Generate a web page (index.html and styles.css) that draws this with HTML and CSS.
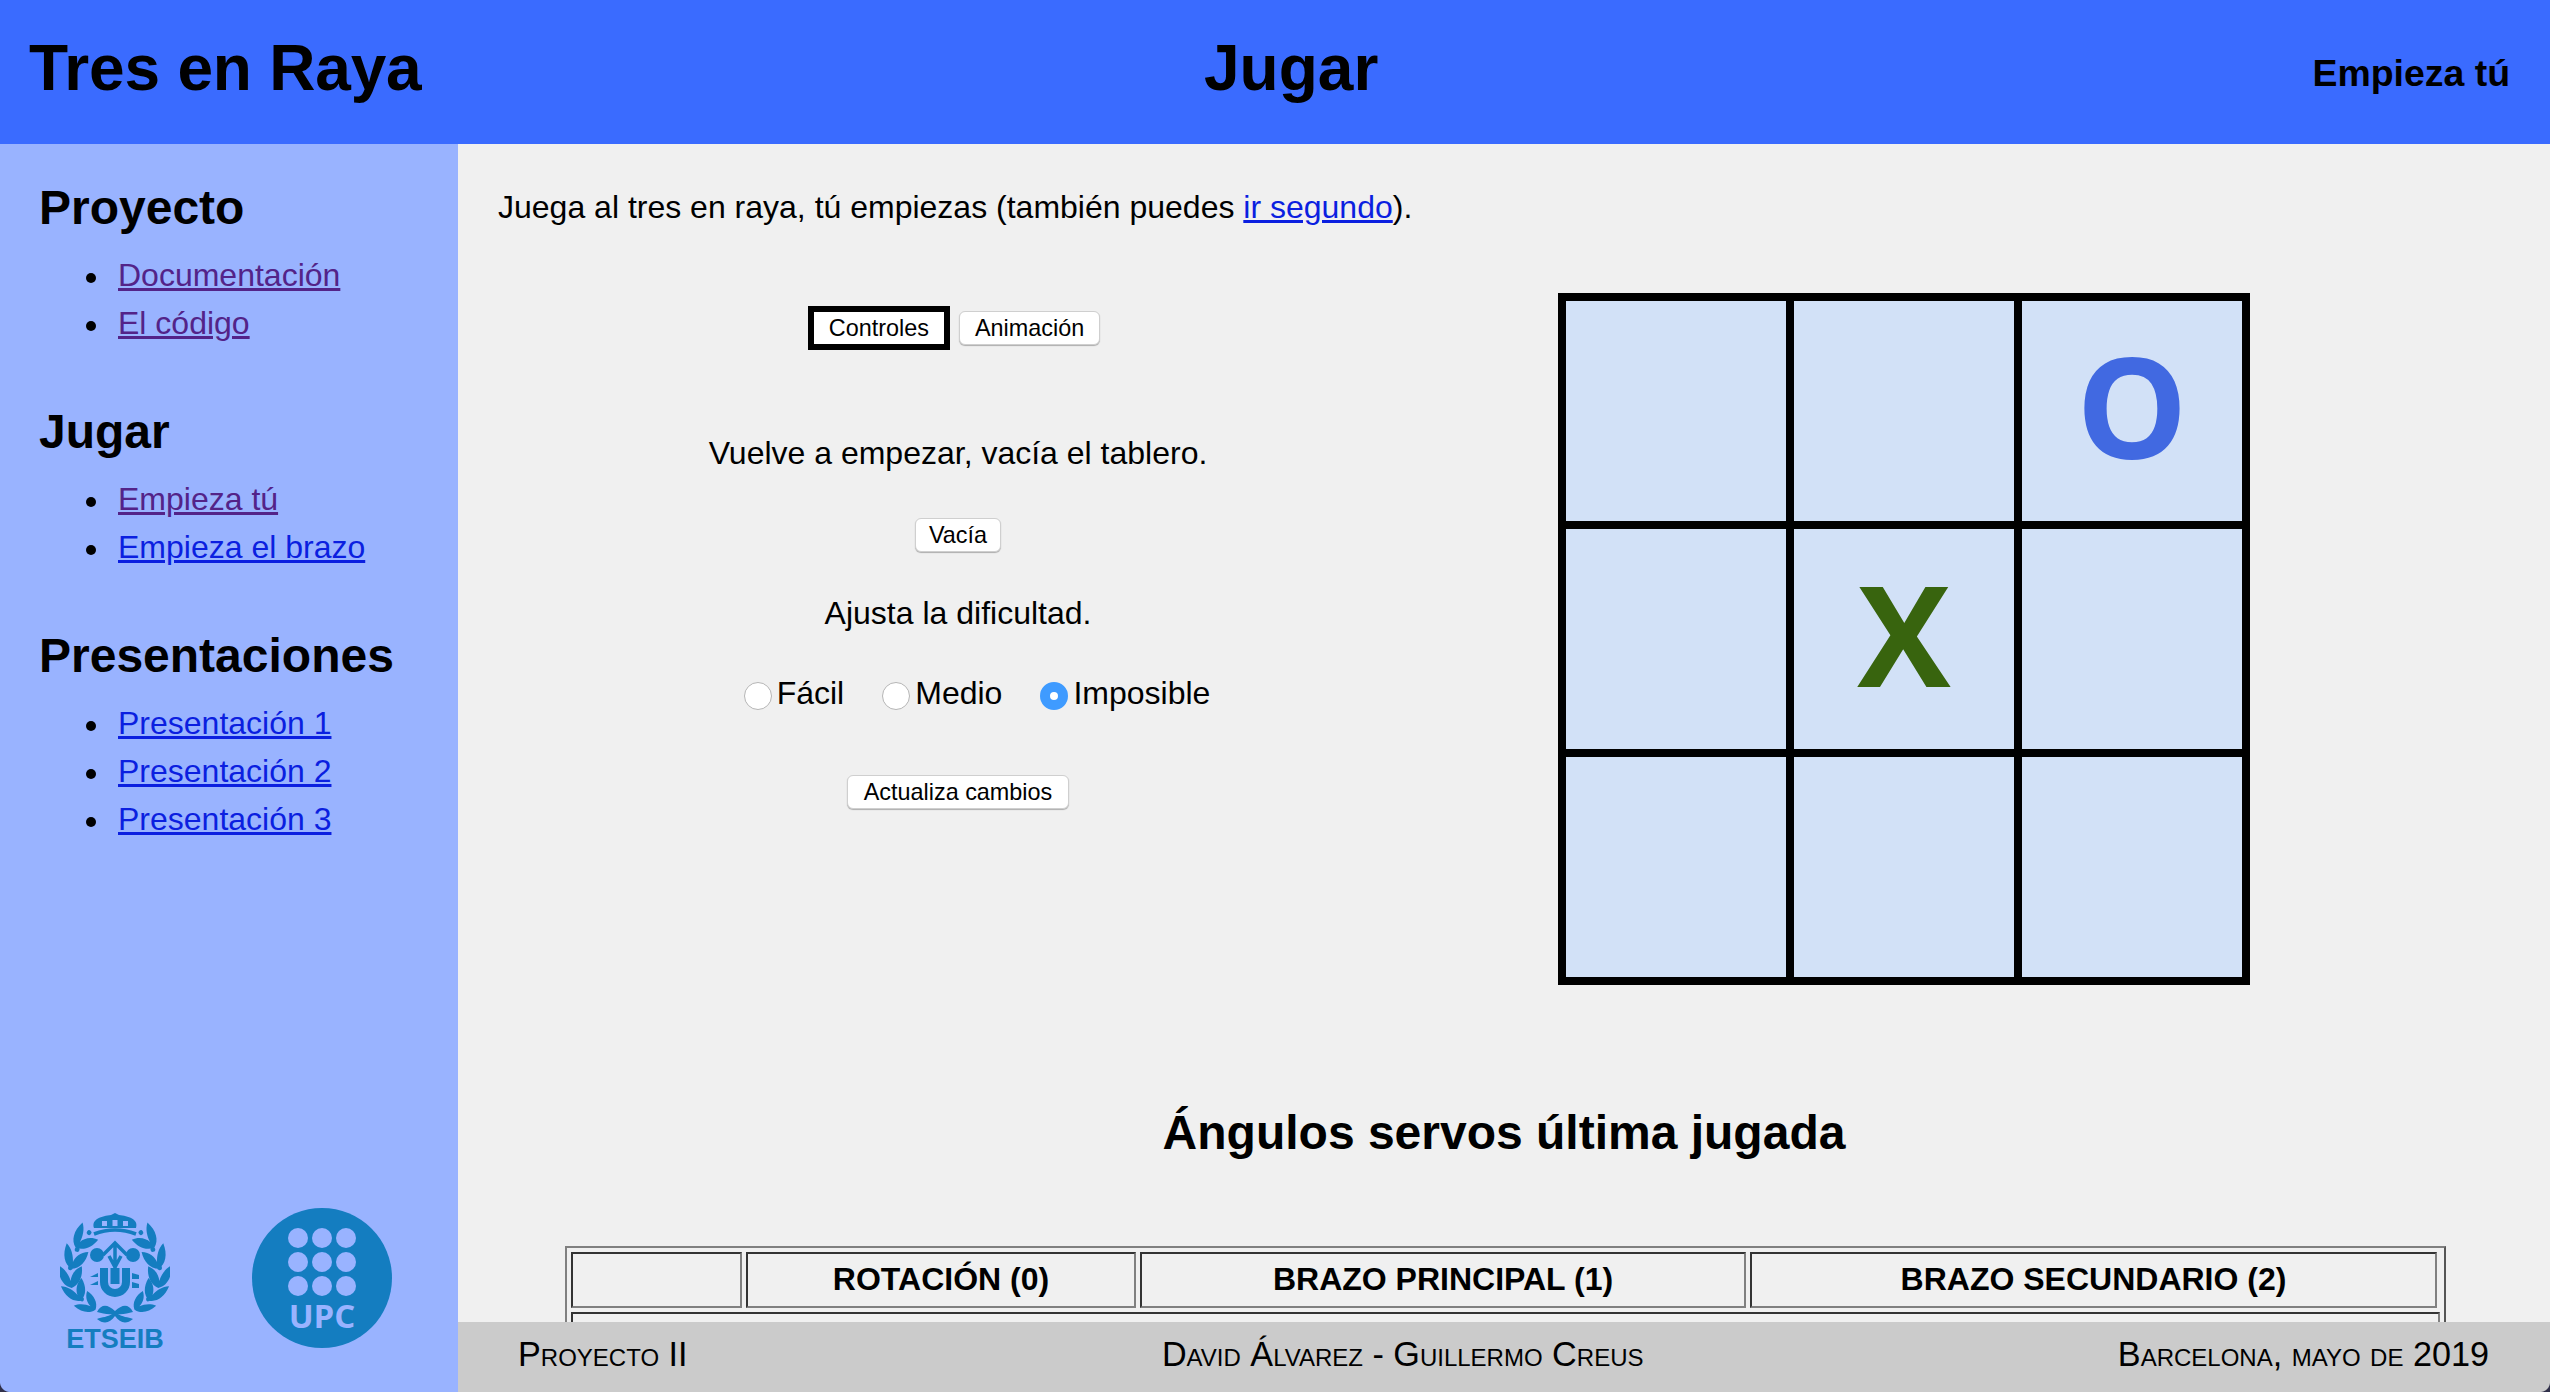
FILE: index.html
```html
<!DOCTYPE html>
<html lang="es">
<head>
<meta charset="utf-8">
<title>Tres en Raya</title>
<link rel="stylesheet" href="styles.css">
</head>
<body>
<div class="page">
  <header class="topbar">
    <h1 class="topbar-title">Tres en Raya</h1>
    <h1 class="topbar-page">Jugar</h1>
    <h3 class="topbar-mode">Empieza tú</h3>
  </header>

  <aside class="sidebar">
    <nav class="nav">
      <section class="nav-group">
        <h2 class="nav-title">Proyecto</h2>
        <ul class="nav-list">
          <li><a class="visited" href="#">Documentación</a></li>
          <li><a class="visited" href="#">El código</a></li>
        </ul>
      </section>
      <section class="nav-group">
        <h2 class="nav-title">Jugar</h2>
        <ul class="nav-list">
          <li><a class="visited" href="#">Empieza tú</a></li>
          <li><a class="link" href="#">Empieza el brazo</a></li>
        </ul>
      </section>
      <section class="nav-group">
        <h2 class="nav-title">Presentaciones</h2>
        <ul class="nav-list">
          <li><a class="link" href="#">Presentación 1</a></li>
          <li><a class="link" href="#">Presentación 2</a></li>
          <li><a class="link" href="#">Presentación 3</a></li>
        </ul>
      </section>
    </nav>
    <div class="logos">
      <svg class="logo-etseib" viewBox="0 0 110 140" width="110" height="140" aria-label="ETSEIB">
        <defs>
          <g id="leaf">
            <path d="M0 12C-8 9-12 0-10-12C-4-8-1-1 0 5C1 0 5-6 13-8C13 2 8 10 0 12Z"/>
            <circle cx="1.500" cy="-8" r="2.400"/>
          </g>
          <g id="wreath">
            <use href="#leaf" transform="translate(23 25) rotate(38)"/>
            <use href="#leaf" transform="translate(14 44) rotate(12)"/>
            <use href="#leaf" transform="translate(10 63) rotate(-8)"/>
            <use href="#leaf" transform="translate(15 78) rotate(-32) scale(.95)"/>
            <use href="#leaf" transform="translate(27 91) rotate(-58) scale(.85)"/>
          </g>
        </defs>
        <g class="crest">
          <path d="M34 15C31 6 42 3 51 2L55 0L59 2C68 3 79 6 76 15Z"/>
          <path class="crest-cut" d="M42 8h5v5h-5zM52.500 7h5v6h-5zM63 8h5v5h-5z"/>
          <path class="crest-line" d="M34 21Q55 13 76 21"/>
          <use href="#wreath"/>
          <use href="#wreath" transform="matrix(-1 0 0 1 110 0)"/>
          <circle cx="37" cy="42" r="7"/>
          <circle cx="73" cy="42" r="7"/>
          <path class="crest-line" d="M43 42L55 30L67 42M55 30V62M49 43L55 54L61 43"/>
          <path d="M40 55h8v14a7 7 0 0 0 14 0V55h8v14a15 15 0 0 1-30 0Z"/>
          <path d="M50.500 55h9v16h-9z"/>
          <path d="M30 64L38 60V64ZM30 72L38 68V72ZM72 60L79 62V66H72ZM72 69L79 71V75H72Z"/>
          <path d="M37 99C42 90 48 92 55 98C62 92 68 90 73 99C68 100 62 102 58 101C62 104 68 104 73 106C66 112 60 110 55 103C50 110 44 112 37 106C42 104 48 104 52 101C48 102 42 100 37 99Z"/>
        </g>
        <text class="logo-etseib-text" x="55" y="135" text-anchor="middle">ETSEIB</text>
      </svg>
      <svg class="logo-upc" viewBox="0 0 140 140" width="140" height="140" aria-label="UPC">
        <circle class="upc-disc" cx="70" cy="70" r="70"/>
        <g class="upc-dots">
          <circle cx="46" cy="30" r="10"/><circle cx="70" cy="30" r="10"/><circle cx="94" cy="30" r="10"/>
          <circle cx="46" cy="54" r="10"/><circle cx="70" cy="54" r="10"/><circle cx="94" cy="54" r="10"/>
          <circle cx="46" cy="78" r="10"/><circle cx="70" cy="78" r="10"/><circle cx="94" cy="78" r="10"/>
        </g>
        <text class="upc-text" x="70" y="120" text-anchor="middle">UPC</text>
      </svg>
    </div>
  </aside>

  <main class="content">
    <p class="intro">Juega al tres en raya, tú empiezas (también puedes <a class="link" href="#">ir segundo</a>).</p>

    <div class="play">
      <div class="controls">
        <div class="tabs">
          <button class="btn btn-active" type="button">Controles</button>
          <button class="btn" type="button">Animación</button>
        </div>
        <p class="controls-text text-reset">Vuelve a empezar, vacía el tablero.</p>
        <button class="btn btn-clear" type="button">Vacía</button>
        <p class="controls-text text-level">Ajusta la dificultad.</p>
        <div class="levels">
          <label class="level"><input class="radio" type="radio" name="nivel">Fácil</label>
          <label class="level"><input class="radio" type="radio" name="nivel">Medio</label>
          <label class="level"><input class="radio" type="radio" name="nivel" checked>Imposible</label>
        </div>
        <button class="btn btn-update" type="button">Actualiza cambios</button>
      </div>

      <div class="board">
        <div class="cell"></div>
        <div class="cell"></div>
        <div class="cell cell-o">O</div>
        <div class="cell"></div>
        <div class="cell cell-x">X</div>
        <div class="cell"></div>
        <div class="cell"></div>
        <div class="cell"></div>
        <div class="cell"></div>
      </div>
    </div>

    <h2 class="servo-title">Ángulos servos última jugada</h2>

    <div class="servo-table">
      <div class="servo-cell"></div>
      <div class="servo-cell">ROTACIÓN (0)</div>
      <div class="servo-cell">BRAZO PRINCIPAL (1)</div>
      <div class="servo-cell servo-cell-last">BRAZO SECUNDARIO (2)</div>
      <div class="servo-cell servo-cell-wide"></div>
    </div>
  </main>

  <footer class="footer">
    <span>Proyecto II</span>
    <span>David Álvarez - Guillermo Creus</span>
    <span>Barcelona, mayo de 2019</span>
  </footer>
</div>
</body>
</html>
```

FILE: styles.css
```css
* { box-sizing: border-box; }

html, body {
  margin: 0;
  height: 100%;
  overflow: hidden;
}

body {
  font-family: "Liberation Sans", Arial, sans-serif;
  font-size: 32px;
  color: #000;
}

.page {
  position: relative;
  display: grid;
  grid-template-columns: 458px 1fr;
  grid-template-rows: 144px 1fr 70px;
  height: 100vh;
  background: #f0f0f0;
}

.page::before,
.page::after {
  content: "";
  position: absolute;
  bottom: 0;
  width: 10px;
  height: 10px;
  z-index: 5;
}

.page::before {
  left: 0;
  background: radial-gradient(circle at top right, transparent 9.5px, #30304a 10.5px);
}

.page::after {
  right: 0;
  background: radial-gradient(circle at top left, transparent 9.5px, #30304a 10.5px);
}

/* Top bar */
.topbar {
  grid-column: 1 / -1;
  display: grid;
  grid-template-columns: 1175px auto 1fr;
  padding: 0 40px 0 29px;
  background: #3a6bff;
}

.topbar-title,
.topbar-page {
  margin: 0;
  font-size: 64px;
  line-height: 136px;
  font-weight: 700;
}

.topbar-title { letter-spacing: -.2px; }

.topbar-mode {
  margin: 0;
  font-size: 37.44px;
  line-height: 146px;
  font-weight: 700;
  text-align: right;
}

/* Sidebar */
.sidebar {
  grid-row: 2 / 4;
  display: flex;
  flex-direction: column;
  background: #99b3ff;
  padding: 36px 0 39px 39px;
}

.nav-group + .nav-group { margin-top: 57px; }

.nav-title {
  margin: 0 0 15px;
  font-size: 48px;
  line-height: 56px;
  font-weight: 700;
}

.nav-list {
  margin: 0;
  padding-left: 79px;
  line-height: 48px;
  list-style: none;
}

.nav-list li::before {
  content: "";
  display: inline-block;
  width: 10px;
  height: 10px;
  margin: 0 22px 3px -32px;
  border-radius: 50%;
  background: #000;
}

.link { color: #0b1fe0; }
.visited { color: #532388; }

.logos {
  display: flex;
  align-items: flex-start;
  gap: 82px;
  margin-top: auto;
  padding-left: 21px;
}

.logo-etseib,
.logo-upc {
  display: block;
  flex: none;
}

.logo-etseib { margin-top: 5px; }

.crest { fill: #147dc0; }
.crest-cut { fill: #99b3ff; }
.crest-line {
  fill: none;
  stroke: #147dc0;
  stroke-width: 3.500;
}

.logo-etseib-text {
  font-size: 27px;
  font-weight: 700;
  fill: #147dc0;
}

.upc-disc { fill: #147dc0; }
.upc-dots { fill: #99b3ff; }

.upc-text {
  font-family: "Open Sans", "Liberation Sans", sans-serif;
  font-size: 33px;
  font-weight: 700;
  fill: #99b3ff;
}

/* Main content */
.content {
  min-height: 0;
  overflow: hidden;
  padding: 39px 0 0 40px;
}

.intro {
  margin: 0;
  line-height: 48px;
}

.play {
  display: grid;
  grid-template-columns: 920px auto;
  justify-content: start;
  align-items: start;
  column-gap: 140px;
  margin-top: 62px;
}

.controls {
  display: flex;
  flex-direction: column;
  align-items: center;
  padding-top: 13px;
}

.tabs {
  display: flex;
  align-items: center;
  gap: 9px;
  padding-right: 8px;
}

.btn {
  height: 34px;
  padding: 1px 15px 0;
  border: 1px solid #cfcfcf;
  border-radius: 6px;
  background: #fff;
  box-shadow: 0 1px 1px rgba(0, 0, 0, .28);
  font: 23.4px/1 "Liberation Sans", Arial, sans-serif;
  color: #000;
}

.btn-active {
  height: 44px;
  padding: 1px 15px 0;
  border: 6px solid #000;
  border-radius: 0;
  box-shadow: none;
}

.btn-clear {
  margin-top: 41px;
  padding: 1px 13px 0;
}

.btn-update {
  margin-top: 58px;
  padding: 1px 16px 0;
}

.controls-text {
  margin: 0;
  line-height: 48px;
}

.text-reset { margin-top: 79px; }
.text-level { margin-top: 37px; }

.levels {
  display: flex;
  gap: 38px;
  margin-top: 32px;
  padding-left: 38px;
  line-height: 48px;
}

.level {
  display: flex;
  align-items: center;
  gap: 5px;
}

.radio {
  appearance: none;
  flex: none;
  width: 28px;
  height: 28px;
  margin: 6px 0 0;
  border: 1px solid #b5b5b5;
  border-radius: 50%;
  background: #fff;
}

.radio:checked {
  border: 10px solid #3f9bff;
  background: #fff;
}

.board {
  display: grid;
  grid-template-columns: repeat(3, 220px);
  grid-auto-rows: 220px;
  gap: 8px;
  padding: 8px;
  background: #000;
}

.cell {
  display: flex;
  align-items: center;
  justify-content: center;
  padding-bottom: 12px;
  background: #d2e1f7;
  font-family: "Open Sans", "Liberation Sans", sans-serif;
  font-size: 140px;
  line-height: 1;
  font-weight: 700;
}

.cell-o { color: #4169e1; }
.cell-x { color: #38640e; }

.servo-title {
  margin: 120px 0 85px;
  margin-left: -40px;
  text-align: center;
  font-size: 48px;
  line-height: 56px;
  font-weight: 700;
}

.servo-table {
  display: grid;
  grid-template-columns: 171px 390px 606px 1fr;
  gap: 4px;
  width: 1881px;
  margin-left: 67px;
  padding: 4px;
  border: 2px solid;
  border-color: #808080 #555 #555 #808080;
}

.servo-cell {
  height: 56px;
  border: 2px solid;
  border-color: #333 #808080 #808080 #333;
  text-align: center;
  font-weight: 700;
  line-height: 50px;
}

.servo-cell-last { margin-right: 3px; }
.servo-cell-wide { grid-column: 1 / -1; }

/* Footer */
.footer {
  position: relative;
  z-index: 1;
  display: flex;
  justify-content: space-between;
  padding: 0 61px 0 60px;
  background: #cbcbcb;
  font-size: 34.2px;
  font-variant: small-caps;
  line-height: 64px;
}
```
